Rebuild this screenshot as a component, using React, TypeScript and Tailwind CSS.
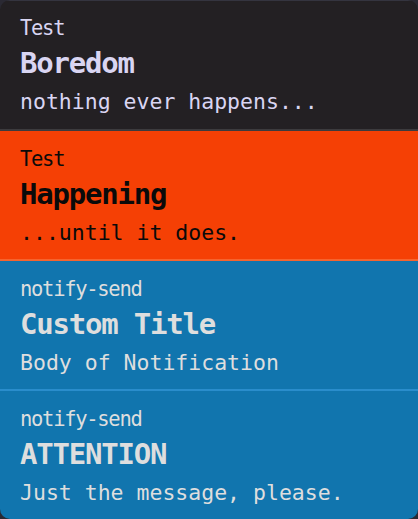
import React from "react";

type Note = {
  app: string;
  title: string;
  body: string;
  card: string;
  text: string;
};

const notes: Note[] = [
  {
    app: "Test",
    title: "Boredom",
    body: "nothing ever happens...",
    card: "bg-[#232023] border-t border-b-2 border-t-[#34343f] border-b-[#3c3b3e] h-[131px]",
    text: "text-[#d9d5f2]",
  },
  {
    app: "Test",
    title: "Happening",
    body: "...until it does.",
    card: "bg-[#f54005] border-b-2 border-b-[#f5642f] h-[130px]",
    text: "text-[#0a0a0a]",
  },
  {
    app: "notify-send",
    title: "Custom Title",
    body: "Body of Notification",
    card: "bg-[#1175ae] border-b-2 border-b-[#2a8dcc] h-[131px]",
    text: "text-[#dedede]",
  },
  {
    app: "notify-send",
    title: "ATTENTION",
    body: "Just the message, please.",
    card: "bg-[#1175ae] h-[128px]",
    text: "text-[#dedede]",
  },
];

function Card({ n, first }: { n: Note; first: boolean }) {
  return (
    <div className={`box-border px-5 ${first ? "pt-[15px]" : "pt-[16px]"} ${n.card} ${n.text}`}>
      <div className="text-[20.5px] leading-[24px] tracking-[-1.3px]">{n.app}</div>
      <div className="mt-1 text-[29px] leading-[38px] font-bold tracking-[-1.2px]">{n.title}</div>
      <div className="mt-[5px] text-[21.5px] leading-[30px]">{n.body}</div>
    </div>
  );
}

export default function App() {
  return (
    <div className="w-[418px] h-[519px] bg-[#2a2933]">
      <div
        className="w-[418px] h-[519px] rounded-[10px] overflow-hidden flex flex-col"
        style={{ fontFamily: '"DejaVu Sans Mono", "Liberation Mono", monospace' }}
      >
        {notes.map((n, i) => (
          <Card key={i} n={n} first={i === 0} />
        ))}
      </div>
    </div>
  );
}
